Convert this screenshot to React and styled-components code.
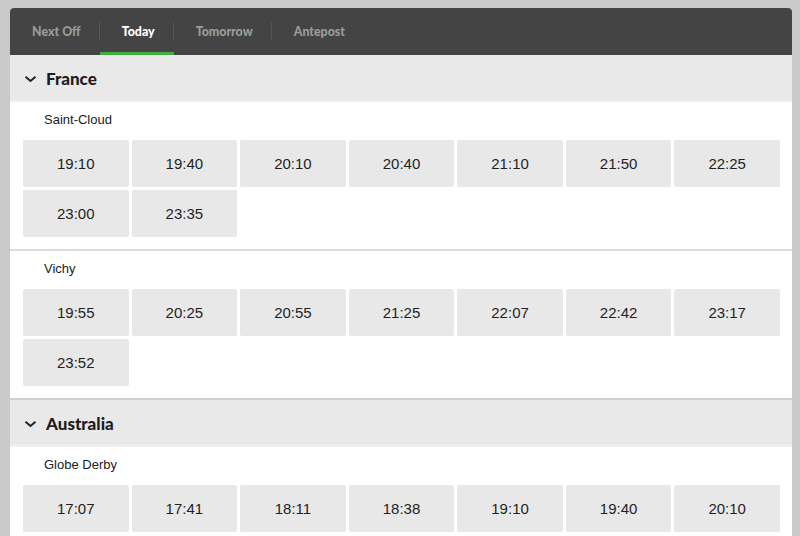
import React from "react";
import styled, { createGlobalStyle } from "styled-components";

const Global = createGlobalStyle`
  html, body { margin: 0; padding: 0; background: #c9c9c9; }
  body { font-family: "Liberation Sans", Arial, sans-serif; }
`;

const Panel = styled.div`
  margin: 8px 0 0 10px;
  width: 782px;
  background: #fff;
  border-radius: 4px 4px 0 0;
  overflow: hidden;
`;

const TabBar = styled.div`
  display: flex;
  height: 47px;
  background: #444;
  align-items: stretch;
`;

const Tab = styled.div`
  position: relative;
  display: flex;
  align-items: center;
  padding: 0 19px 0 22px;
  font-family: Lato, "Open Sans", sans-serif;
  font-weight: 900;
  font-size: 12.4px;
  color: ${(p) => (p.$active ? "#fff" : "#9b9b9b")};
  box-shadow: ${(p) => (p.$active ? "inset 0 -3px 0 #3fae3f" : "none")};
  &::after {
    content: "";
    position: absolute;
    right: 0;
    top: 14px;
    bottom: 14px;
    width: 1px;
    background: ${(p) => (p.$last ? "transparent" : "#555")};
  }
`;

const CountryHeader = styled.div`
  display: flex;
  align-items: center;
  gap: 9px;
  height: 47px;
  padding: 2px 0 0 14px;
  box-sizing: border-box;
  background: #e9e9e9;
  border-bottom: 2px solid #efefef;
  font-family: Lato, "Open Sans", sans-serif;
  font-weight: 900;
  font-size: 17px;
  color: #1e1e1e;
`;

const Section = styled.section`
  border-top: ${(p) => (p.$first ? "none" : "2px solid #cfcfcf")};
`;

const Meeting = styled.div`
  padding: 10px 12px 12px 13px;
  border-top: ${(p) => (p.$first ? "none" : "2px solid #dcdcdc")};
`;

const MeetingName = styled.div`
  height: 16px;
  line-height: 16px;
  padding-left: 21px;
  margin-bottom: 12px;
  font-size: 13px;
  color: #222;
`;

const Grid = styled.div`
  display: grid;
  grid-template-columns: repeat(7, 1fr);
  gap: 3px;
`;

const TimeButton = styled.div`
  height: 47px;
  display: flex;
  align-items: center;
  justify-content: center;
  background: #e8e8e8;
  border-radius: 2px;
  font-size: 15px;
  color: #1f1f1f;
`;

const Chevron = () => (
  <svg width="13" height="8" viewBox="0 0 13 8">
    <polyline points="1.5,1.8 6.5,6 11.5,1.8" fill="none" stroke="#222" strokeWidth="2" />
  </svg>
);

const data = [
  {
    country: "France",
    meetings: [
      { name: "Saint-Cloud", times: ["19:10", "19:40", "20:10", "20:40", "21:10", "21:50", "22:25", "23:00", "23:35"] },
      { name: "Vichy", times: ["19:55", "20:25", "20:55", "21:25", "22:07", "22:42", "23:17", "23:52"] },
    ],
  },
  {
    country: "Australia",
    meetings: [
      { name: "Globe Derby", times: ["17:07", "17:41", "18:11", "18:38", "19:10", "19:40", "20:10"] },
    ],
  },
];

const tabs = ["Next Off", "Today", "Tomorrow", "Antepost"];

export default function App() {
  return (
    <>
      <Global />
      <Panel>
        <TabBar>
          {tabs.map((t, i) => (
            <Tab key={t} $active={t === "Today"} $last={i === tabs.length - 1}>
              {t}
            </Tab>
          ))}
        </TabBar>
        {data.map((c, ci) => (
          <Section key={c.country} $first={ci === 0}>
            <CountryHeader>
              <Chevron />
              {c.country}
            </CountryHeader>
            {c.meetings.map((m, mi) => (
              <Meeting key={m.name} $first={mi === 0}>
                <MeetingName>{m.name}</MeetingName>
                <Grid>
                  {m.times.map((t) => (
                    <TimeButton key={t}>{t}</TimeButton>
                  ))}
                </Grid>
              </Meeting>
            ))}
          </Section>
        ))}
      </Panel>
    </>
  );
}
